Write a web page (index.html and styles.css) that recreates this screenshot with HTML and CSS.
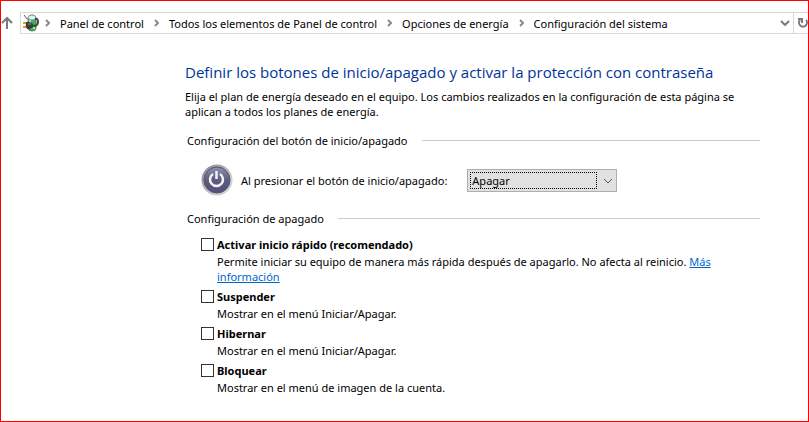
FILE: index.html
```html
<!DOCTYPE html>
<html lang="es">
<head>
<meta charset="utf-8">
<title>Configuración del sistema</title>
<link rel="stylesheet" href="styles.css">
</head>
<body>
<div class="window">
  <header class="toolbar">
    <button class="up" type="button" aria-label="Subir">
      <svg width="12" height="14" viewBox="0 0 12 14" fill="none" stroke="#7a7a7a" stroke-width="2"><path d="M6 13V2M1 7l5-5 5 5"/></svg>
    </button>
    <div class="address">
      <svg class="power-plan" width="18" height="18" viewBox="0 0 18 18">
        <path d="M6 4Q6 1 10 1t4 3v10q0 3-4 3t-4-3z" fill="#35b944" stroke="#65746a"/>
        <path d="M6 4Q6 1 10 1t4 3q-1 2-4 2T6 4z" fill="#e5f0f5" stroke="#8797a0"/>
        <path d="M8 6v3M12 13v2" stroke="#a1ee9f" stroke-width="2"/>
        <path d="M2 1l3 4" stroke="#555" stroke-width="1"/>
        <path d="M1 9h4M1 13h4" stroke="#d9a51c" stroke-width="2"/>
        <path d="M4 8h4l3 2v3l-3 2H5q-2-3-1-7z" fill="#3b3b3d"/>
        <path d="M11 12q5 0 5-4t-3-3" fill="none" stroke="#414649" stroke-width="2"/>
        <path d="M6 10h3" stroke="#999"/>
      </svg>
      <nav class="crumbs" aria-label="Ruta">
        <svg class="sep" viewBox="0 0 5 8"><path d="M1 1l3 3-3 3"/></svg>
        <a href="#">Panel de control</a>
        <svg class="sep" viewBox="0 0 5 8"><path d="M1 1l3 3-3 3"/></svg>
        <a href="#">Todos los elementos de Panel de control</a>
        <svg class="sep" viewBox="0 0 5 8"><path d="M1 1l3 3-3 3"/></svg>
        <a href="#">Opciones de energía</a>
        <svg class="sep" viewBox="0 0 5 8"><path d="M1 1l3 3-3 3"/></svg>
        <a href="#">Configuración del sistema</a>
      </nav>
      <button class="history" type="button" aria-label="Ubicaciones anteriores">
        <svg width="10" height="6" viewBox="0 0 10 6" fill="none" stroke="#7a7a7a" stroke-width="2"><path d="M1 1l4 4 4-4"/></svg>
      </button>
      <button class="refresh" type="button" aria-label="Actualizar">
        <svg width="12" height="12" viewBox="0 0 12 12" fill="none" stroke="#7a7a7a" stroke-width="2"><path d="M3 3a4 4 0 1 0 6 0M1 2h4v4"/></svg>
      </button>
    </div>
  </header>
  <main class="content">
    <h1>Definir los botones de inicio/apagado y activar la protección con contraseña</h1>
    <p class="intro">Elija el plan de energía deseado en el equipo. Los cambios realizados en la configuración de esta página se<br>aplican a todos los planes de energía.</p>
    <h2>Configuración del botón de inicio/apagado</h2>
    <div class="power-row">
      <svg width="32" height="32" viewBox="0 0 32 32">
        <defs>
          <linearGradient id="rim" x2="1" y2="1"><stop stop-color="#808084"/><stop offset=".6" stop-color="#c6c6ca"/><stop offset="1" stop-color="#dcdcde"/></linearGradient>
          <linearGradient id="face" x2="0" y2="1"><stop stop-color="#9090ae"/><stop offset=".5" stop-color="#5c5c80"/><stop offset="1" stop-color="#50507a"/></linearGradient>
        </defs>
        <circle cx="16" cy="16" r="15.5" fill="url(#rim)"/>
        <circle cx="16" cy="16" r="13" fill="url(#face)" stroke="#54546c"/>
        <path d="M12 10a6.500 6.500 0 1 0 7 0M15.500 7v8" fill="none" stroke="#f3f3f6" stroke-width="2.500"/>
      </svg>
      <label for="action">Al presionar el botón de inicio/apagado:</label>
      <div class="combo">
        <select id="action"><option>Apagar</option></select>
        <svg width="10" height="6" viewBox="0 0 10 6" fill="none" stroke="#555"><path d="M1 1l4 4 4-4"/></svg>
      </div>
    </div>
    <h2>Configuración de apagado</h2>
    <div class="options">
      <div class="option">
        <input type="checkbox" id="fast"><label for="fast">Activar inicio rápido (recomendado)</label>
        <p>Permite iniciar su equipo de manera más rápida después de apagarlo. No afecta al reinicio. <a href="#">Más<br>información</a></p>
      </div>
      <div class="option">
        <input type="checkbox" id="sleep"><label for="sleep">Suspender</label>
        <p>Mostrar en el menú Iniciar/Apagar.</p>
      </div>
      <div class="option">
        <input type="checkbox" id="hibernate"><label for="hibernate">Hibernar</label>
        <p>Mostrar en el menú Iniciar/Apagar.</p>
      </div>
      <div class="option">
        <input type="checkbox" id="lock"><label for="lock">Bloquear</label>
        <p>Mostrar en el menú de imagen de la cuenta.</p>
      </div>
    </div>
  </main>
</div>
</body>
</html>
```
FILE: styles.css
```css
* { box-sizing: border-box; }
body {
  margin: 0;
  background: #fff;
  color: #000;
  font: 11px/15px "Noto Sans", "Open Sans", sans-serif;
}
h1, h2, p { margin: 0; font-weight: normal; }
svg { flex: none; }
button { padding: 0; border: 0; background: none; font: inherit; }
.window {
  min-height: 100vh;
  border: 1px solid #f00;
  overflow: hidden;
}
.toolbar {
  display: flex;
  align-items: center;
  padding-top: 11px;
}
.up { display: flex; width: 19px; }
.address {
  flex: 1;
  display: flex;
  align-items: center;
  height: 22px;
  border: 1px solid #d9d9d9;
  border-right: 0;
}
.power-plan { margin-left: 1px; }
.crumbs {
  flex: 1;
  display: flex;
  align-items: center;
  gap: 10px;
  margin-left: 5px;
  white-space: nowrap;
}
.crumbs a { color: inherit; text-decoration: none; }
.sep {
  width: 5px;
  height: 8px;
  fill: none;
  stroke: #8a8a8a;
  stroke-width: 2;
}
.history, .refresh {
  display: flex;
  align-items: center;
  height: 20px;
}
.history { width: 13px; }
.refresh {
  width: 15px;
  padding-left: 3px;
  border-left: 1px solid #d9d9d9;
}
.content {
  margin: 0 48px 0 184px;
  padding-top: 27px;
  white-space: nowrap;
}
h1 {
  color: #039;
  font-family: "Open Sans", "Noto Sans", sans-serif;
  font-size: 15px;
  line-height: 22px;
}
.intro { margin: 6px 0 14px; }
h2 {
  display: flex;
  align-items: center;
  gap: 14px;
  margin-left: 2px;
  font-size: 11px;
}
h2::after {
  content: "";
  flex: 1;
  height: 1px;
  background: #ccc;
}
.power-row {
  display: flex;
  align-items: center;
  margin: 16px 0 15px 16px;
}
.power-row label { margin: 0 20px 0 8px; }
.combo {
  position: relative;
  width: 150px;
}
.combo svg {
  position: absolute;
  top: 9px;
  right: 4px;
  pointer-events: none;
}
select {
  display: block;
  appearance: none;
  width: 100%;
  height: 23px;
  padding: 0 4px;
  border: 1px solid #adadad;
  border-radius: 0;
  background: #e1e1e1;
  color: #000;
  font: inherit;
}
.combo::after {
  content: "";
  position: absolute;
  inset: 3px 20px 3px 3px;
  border: 1px dotted #000;
  pointer-events: none;
}
.options {
  display: grid;
  gap: 3px;
  margin: 9px 0 0 16px;
}
.option {
  display: grid;
  grid-template-columns: 13px 1fr;
  column-gap: 3px;
  align-items: center;
}
.option label { font-weight: bold; line-height: 19px; }
.option p { grid-column: 2; }
.option a { color: #06c; }
input {
  appearance: none;
  width: 13px;
  height: 13px;
  margin: 0;
  border: 1px solid #333;
  background: #fff;
}
```
